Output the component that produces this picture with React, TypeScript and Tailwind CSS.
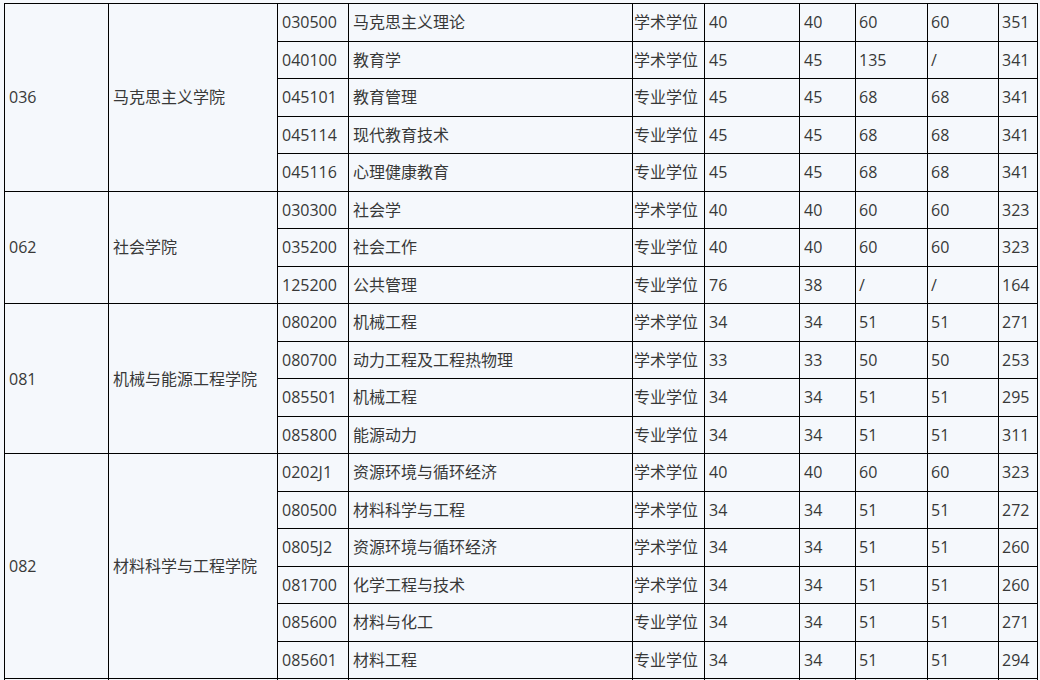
import React from 'react';

type Row = [string, string, string, string, string, string, string, string];

interface Group {
  code: string;
  name: string;
  rows: Row[];
}

const groups: Group[] = [
  {
    code: '036',
    name: '马克思主义学院',
    rows: [
      ['030500', '马克思主义理论', '学术学位', '40', '40', '60', '60', '351'],
      ['040100', '教育学', '学术学位', '45', '45', '135', '/', '341'],
      ['045101', '教育管理', '专业学位', '45', '45', '68', '68', '341'],
      ['045114', '现代教育技术', '专业学位', '45', '45', '68', '68', '341'],
      ['045116', '心理健康教育', '专业学位', '45', '45', '68', '68', '341'],
    ],
  },
  {
    code: '062',
    name: '社会学院',
    rows: [
      ['030300', '社会学', '学术学位', '40', '40', '60', '60', '323'],
      ['035200', '社会工作', '专业学位', '40', '40', '60', '60', '323'],
      ['125200', '公共管理', '专业学位', '76', '38', '/', '/', '164'],
    ],
  },
  {
    code: '081',
    name: '机械与能源工程学院',
    rows: [
      ['080200', '机械工程', '学术学位', '34', '34', '51', '51', '271'],
      ['080700', '动力工程及工程热物理', '学术学位', '33', '33', '50', '50', '253'],
      ['085501', '机械工程', '专业学位', '34', '34', '51', '51', '295'],
      ['085800', '能源动力', '专业学位', '34', '34', '51', '51', '311'],
    ],
  },
  {
    code: '082',
    name: '材料科学与工程学院',
    rows: [
      ['0202J1', '资源环境与循环经济', '学术学位', '40', '40', '60', '60', '323'],
      ['080500', '材料科学与工程', '学术学位', '34', '34', '51', '51', '272'],
      ['0805J2', '资源环境与循环经济', '学术学位', '34', '34', '51', '51', '260'],
      ['081700', '化学工程与技术', '学术学位', '34', '34', '51', '51', '260'],
      ['085600', '材料与化工', '专业学位', '34', '34', '51', '51', '271'],
      ['085601', '材料工程', '专业学位', '34', '34', '51', '51', '294'],
    ],
  },
  {
    // next group starts just below the visible area
    code: '',
    name: '',
    rows: [['', '', '', '', '', '', '', '']],
  },
];

const widths = [104, 169, 71, 284, 72, 95, 56, 72, 71, 39];

const cell = 'border border-black pl-[4px] pr-0 align-middle whitespace-nowrap';

export default function App() {
  return (
    <div
      className="bg-[#f5f8fc] pl-[4px] pt-[3px] text-[16px] text-[#383838] overflow-hidden h-[680px]"
      style={{ fontFamily: '"Open Sans", "Noto Sans CJK SC", sans-serif' }}
    >
      <table className="border-collapse table-fixed w-[1034px]">
        <colgroup>
          {widths.map((w, i) => (
            <col key={i} style={{ width: w }} />
          ))}
        </colgroup>
        <tbody>
          {groups.map((g, gi) =>
            g.rows.map((r, i) => (
              <tr key={gi + '-' + i} className="h-[37.5px] leading-[20px]">
                {i === 0 && (
                  <>
                    <td rowSpan={g.rows.length} className={cell}>
                      {g.code}
                    </td>
                    <td rowSpan={g.rows.length} className={cell}>
                      {g.name}
                    </td>
                  </>
                )}
                <td className={cell}>{r[0]}</td>
                <td className={cell}>{r[1]}</td>
                <td className={cell + ' !pl-[1px]'}>{r[2]}</td>
                <td className={cell}>{r[3]}</td>
                <td className={cell}>{r[4]}</td>
                <td className={cell + ' !pl-[3px]'}>{r[5]}</td>
                <td className={cell + ' !pl-[3px]'}>{r[6]}</td>
                <td className={cell + ' !pl-[3px]'}>{r[7]}</td>
              </tr>
            ))
          )}
        </tbody>
      </table>
    </div>
  );
}
